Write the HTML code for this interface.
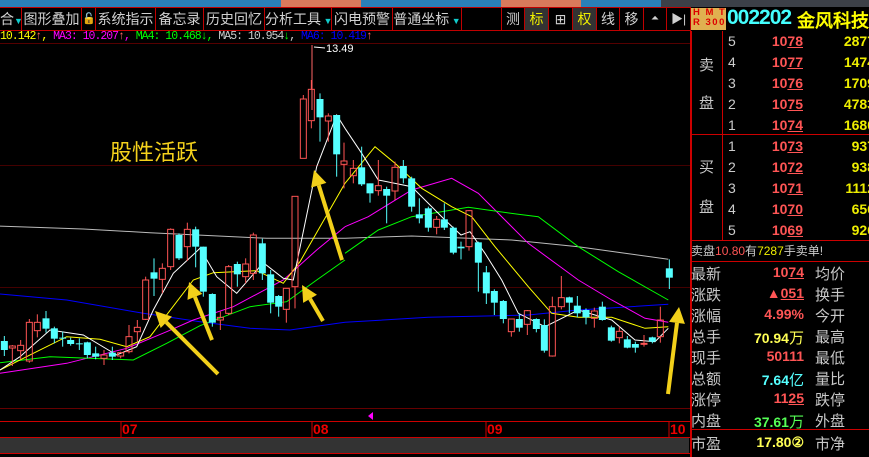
<!DOCTYPE html>
<html><head><meta charset="utf-8">
<style>
*{margin:0;padding:0;box-sizing:border-box}
body{width:869px;height:457px;background:#000;overflow:hidden;position:relative;font-family:"Liberation Sans","Noto Sans CJK SC",sans-serif}
.a{position:absolute;white-space:nowrap}
.tb{position:absolute;top:7px;height:24px;border:1px solid #c00000;border-left:none;color:#d0d0d0;font-size:14px;line-height:22px;text-align:center;white-space:nowrap;overflow:hidden}
.cj{font-family:"Liberation Sans","WenQuanYi Zen Hei",sans-serif}
.lg{font-family:"Liberation Mono",monospace;font-size:11.5px;top:30px;letter-spacing:-1px}
.lab{color:#c8c8c8;font-size:15px;font-family:"Liberation Sans","WenQuanYi Zen Hei",sans-serif}
.num{font-weight:bold;font-size:14px;font-family:"Liberation Sans",sans-serif}
</style></head><body>
<div class="a" style="left:0;top:0;width:869px;height:7px;background:#2a80b8"></div>
<div class="a" style="left:281px;top:0;width:80px;height:7px;background:#d97a5c"></div>
<div class="a" style="left:501px;top:0;width:80px;height:7px;background:#d97a5c"></div>
<div class="a" style="left:661px;top:0;width:208px;height:7px;background:#3c4048"></div>

<div class="tb cj" style="left:0;width:22px">合<span style="color:#1cc;font-size:9px">▼</span></div>
<div class="tb cj" style="left:22px;width:60px">图形叠加</div>
<div class="tb" style="left:82px;width:14px;font-size:11px">🔓</div>
<div class="tb cj" style="left:96px;width:60px">系统指示</div>
<div class="tb cj" style="left:156px;width:48px">备忘录</div>
<div class="tb cj" style="left:204px;width:61px">历史回忆</div>
<div class="tb cj" style="left:265px;width:67px">分析工具<span style="color:#1cc;font-size:9px"> ▼</span></div>
<div class="tb cj" style="left:332px;width:61px">闪电预警</div>
<div class="tb cj" style="left:393px;width:69px">普通坐标<span style="color:#1cc;font-size:9px"> ▼</span></div>
<div class="tb" style="left:462px;width:40px"></div>
<div class="tb cj" style="left:502px;width:23px">测</div>
<div class="tb cj" style="left:525px;width:24px;background:#333;color:#ee0">标</div>
<div class="tb" style="left:549px;width:24px">⊞</div>
<div class="tb cj" style="left:573px;width:24px;background:#333;color:#ee0">权</div>
<div class="tb cj" style="left:597px;width:23px">线</div>
<div class="tb cj" style="left:620px;width:24px">移</div>
<div class="tb" style="left:644px;width:23px;font-size:10px">⏶</div>
<div class="tb" style="left:667px;width:24px;font-size:12px">▶|</div>
<div class="a" style="left:691px;top:8px;width:35px;height:22px;background:#e0b050;color:#d00;font-size:9.5px;font-weight:bold;line-height:10px;padding-left:2px;letter-spacing:1.5px">H M T<br>R 300</div>
<div class="a" style="left:727px;top:6px;color:#4ff;font-size:21px;font-weight:bold;letter-spacing:-1px">002202</div>
<div class="a cj" style="left:797px;top:7px;color:#ff0;font-size:18px;font-weight:bold">金风科技</div>

<div class="a lg" style="left:0"><span style="color:#ff0">10.142</span><span style="color:#f66">↑</span><span style="color:#ff0">,</span> <span style="color:#f0f">MA3: 10.207</span><span style="color:#f66">↑</span><span style="color:#f0f">,</span> <span style="color:#0f0">MA4: 10.468↓,</span> <span style="color:#ccc">MA5: 10.954</span><span style="color:#0f0">↓</span><span style="color:#ccc">,</span> <span style="color:#00f">MA6: 10.419</span><span style="color:#f66">↑</span></div>

<svg class="a" style="left:0;top:0" width="691" height="457" id="ch">
<line x1="0" y1="43.5" x2="691" y2="43.5" stroke="#500" />
<line x1="0" y1="165.5" x2="691" y2="165.5" stroke="#400" />
<line x1="0" y1="287.5" x2="691" y2="287.5" stroke="#400" />
<line x1="0" y1="408.5" x2="691" y2="408.5" stroke="#600" />
<line x1="0" y1="421.5" x2="691" y2="421.5" stroke="#c00" />
<line x1="0" y1="437.5" x2="691" y2="437.5" stroke="#c00" />
<rect x="0" y="438" width="689" height="15" fill="#333"/>
<line x1="0" y1="453.5" x2="691" y2="453.5" stroke="#c00" />
<line x1="312" y1="45" x2="312" y2="110" stroke="#f66"/>
<text x="326" y="52" fill="#fff" font-family="Liberation Sans" font-size="11">13.49</text>
<line x1="314" y1="47" x2="325" y2="48" stroke="#fff"/>
<polygon points="368,416 373,412 373,420" fill="#f0f"/>
<g fill="#e00" font-family="Liberation Sans" font-size="14" font-weight="bold">
<line x1="121" y1="421" x2="121" y2="437" stroke="#c00"/><text x="122" y="434">07</text>
<line x1="312" y1="421" x2="312" y2="437" stroke="#c00"/><text x="313" y="434">08</text>
<line x1="486" y1="421" x2="486" y2="437" stroke="#c00"/><text x="487" y="434">09</text>
<line x1="669" y1="421" x2="669" y2="437" stroke="#c00"/><text x="670" y="434">10</text>
</g>
<text x="110" y="160" fill="#f5d21c" font-family="Liberation Sans,WenQuanYi Zen Hei,sans-serif" font-size="22">股性活跃</text>
</svg>

<div class="a" style="left:690px;top:31px;width:2px;height:426px;background:#c00"></div>
<div class="a" style="left:722px;top:31px;width:1px;height:209px;background:#c00"></div>
<div class="a" style="left:691px;top:134px;width:178px;height:1px;background:#c00"></div>
<div class="a" style="left:691px;top:240px;width:178px;height:1px;background:#c00"></div>
<div class="a" style="left:691px;top:261px;width:178px;height:1px;background:#c00"></div>
<div class="a" style="left:691px;top:429px;width:178px;height:1px;background:#c00"></div>
<div class="a lab" style="left:699px;top:54px">卖</div>
<div class="a lab" style="left:699px;top:92px">盘</div>
<div class="a lab" style="left:699px;top:156px">买</div>
<div class="a lab" style="left:699px;top:196px">盘</div>
<div id="ob"></div>
<div class="a cj" style="left:691px;top:242px;font-size:12px;color:#ccc">卖盘<span style="color:#f55">10.80</span>有<span style="color:#ee0">7287</span>手卖单!</div>
<div id="qt"></div>

<script>
var s=document.getElementById('ch'),NS='http://www.w3.org/2000/svg';
function el(t,a){var e=document.createElementNS(NS,t);for(var k in a)e.setAttribute(k,a[k]);s.insertBefore(e,s.querySelector('text'));return e;}
var c1=[[13,783,810,768,828,0],[37,798,804,795,858,1],[62,796,812,780,838,1],[88,727,843,717,848,1],[112,727,752,703,772,1],[138,715,746,693,758,0],[163,745,776,740,790,0],[188,773,776,755,800,0],[212,780,792,773,797,0],[238,790,792,775,810,0],[262,787,825,785,835,0],[287,820,830,800,838,0],[312,825,835,810,855,1],[337,818,830,800,840,0],[362,818,828,815,835,1],[387,770,815,735,820,1],[412,742,755,720,785,1],[437,600,718,590,720,1],[462,577,596,535,648,0],[487,565,598,550,640,1],[512,448,560,445,570,1],[537,465,535,460,540,0],[562,448,500,428,543,1],[587,448,500,440,562,0],[610,500,635,500,650,0],[637,642,728,640,740,0],[661,712,720,695,750,1],[686,560,700,555,705,1],[712,552,583,545,620,0],[737,552,590,535,610,1],[760,465,580,458,600,1],[787,490,580,476,600,0],[812,583,668,570,700,0],[836,648,680,645,710,0],[859,625,688,625,728,1],[885,349,620,349,685,1],[910,57,235,45,235,1],[934,28,122,0,145,1],[960,57,112,40,185,0],[985,108,123,100,185,1],[1010,105,223,105,290,0],[1032,243,253,188,325,1]];
var c2=[[25,265,287,240,310,1],[50,262,313,200,318,0],[75,310,340,310,368,0],[100,317,332,240,347,1],[125,327,347,320,430,0],[150,262,333,245,360,1],[175,258,295,240,310,0],[200,295,380,290,395,0],[223,403,415,355,430,0],[250,385,443,380,455,0],[275,418,442,408,463,1],[298,418,443,370,450,0],[325,443,518,440,523,0],[348,500,505,485,538,0],[372,392,500,390,512,1],[400,487,548,485,635,0],[424,577,640,558,672,0],[448,633,668,628,705,0],[475,663,717,660,730,0],[499,717,755,717,770,1],[523,717,743,700,755,0],[547,692,733,690,765,1],[574,717,747,715,757,0],[598,735,812,718,818,0],[622,680,828,650,830,1],[649,653,680,588,688,1],[673,652,668,650,700,0],[697,677,700,648,712,0],[723,690,712,685,733,0],[748,693,715,683,743,1],[772,680,720,665,722,0],[799,742,782,737,785,0],[823,754,773,740,790,1],[847,778,803,768,805,0],[871,792,803,785,818,0],[897,790,793,765,800,1],[922,772,785,770,790,0],[946,720,770,680,788,1],[973,565,593,538,627,0]];
function pl(a,off,col){var p=a.map(function(q){return (q[0]/3+off).toFixed(1)+','+(q[1]/3+80).toFixed(1)}).join(' ');el('polyline',{points:p,fill:'none',stroke:col,'stroke-width':1});}
var L={
'#bbb':[[[-10,438],[250,447],[450,458],[800,475],[1035,475]],[[0,475],[200,468],[500,480],[700,500],[970,538]]],
'#00f':[[[0,642],[200,660],[430,700],[600,725],[750,745],[870,750],[1035,727]],[[0,727],[250,712],[550,705],[700,690],[970,673]]],
'#f0f':[[[0,880],[200,850],[380,805],[500,755],[580,720],[700,680],[850,600],[950,510],[1035,440]],[[0,440],[70,410],[200,330],[320,295],[400,340],[550,490],[700,600],[800,660],[900,715],[970,727]]],
'#0f0':[[[0,848],[150,830],[400,840],[500,790],[600,737],[750,680],[860,665],[950,600],[1035,540]],[[0,520],[100,450],[200,410],[370,382],[520,403],[580,410],[700,500],[820,575],[970,660]]],
'#ff0':[[[0,870],[100,820],[200,770],[300,778],[380,800],[450,770],[580,600],[640,578],[770,572],[850,610],[900,545],[1035,310]],[[0,310],[90,200],[150,250],[230,325],[320,380],[380,410],[450,500],[550,620],[620,700],[700,712],[800,712],[900,745],[970,740]]],
'#fff':[[[0,870],[60,830],[150,750],[250,765],[350,825],[410,800],[460,690],[520,580],[600,505],[650,590],[710,640],[790,548],[850,595],[880,600],[950,260],[1010,105],[1035,145]],[[0,145],[50,220],[100,300],[200,320],[300,420],[348,465],[375,455],[420,520],[470,600],[520,700],[600,740],[700,690],[800,720],[870,780],[930,785],[970,745]]]};
for(var k in L){pl(L[k][0],0,k);pl(L[k][1],345,k);}
function cd(a,off){a.forEach(function(q){var x=q[0]/3+off,bt=q[1]/3+80,bb=q[2]/3+80,wt=q[3]/3+80,wb=q[4]/3+80;var col=q[5]?'#ff5555':'#55ffff';
var h=Math.max(bb-bt,1);
if(q[5]){el('line',{x1:x,y1:wt,x2:x,y2:bt,stroke:col});el('line',{x1:x,y1:bb,x2:x,y2:wb,stroke:col});
el('rect',{x:x-3,y:bt,width:6,height:h,fill:'none',stroke:col,'stroke-width':1});}
else{el('line',{x1:x,y1:wt,x2:x,y2:wb,stroke:col});el('rect',{x:x-3.5,y:bt,width:7,height:h,fill:col});}});}
cd(c1,0);cd(c2,345);
function ar(x1,y1,x2,y2){var dx=x2-x1,dy=y2-y1,l=Math.hypot(dx,dy),ux=dx/l,uy=dy/l,hl=16,hw=8;var bx=x2-ux*hl,by=y2-uy*hl;
el('line',{x1:x1,y1:y1,x2:bx,y2:by,stroke:'#f2d01a','stroke-width':4});
el('polygon',{points:x2+','+y2+' '+(bx-uy*hw)+','+(by+ux*hw)+' '+(bx+uy*hw)+','+(by-ux*hw),fill:'#f2d01a'});}
ar(218,374,155,311);ar(212,340,189,282);ar(342,260,314,170);ar(323,321,302,285);ar(668,394,679,307);
var ob=document.getElementById('ob'),h='';
var sell=[['5','1078','2877'],['4','1077','1474'],['3','1076','1709'],['2','1075','4783'],['1','1074','1680']];
var buy=[['1','1073','937'],['2','1072','938'],['3','1071','1112'],['4','1070','656'],['5','1069','926']];
function row(r,y){return '<div class="a num" style="left:728px;top:'+y+'px;color:#ccc;font-weight:normal">'+r[0]+'</div><div class="a num" style="left:760px;width:43px;text-align:right;top:'+y+'px;color:#ff5555">'+r[1].slice(0,2)+'<u>'+r[1].slice(2)+'</u></div><div class="a num" style="left:815px;width:60px;text-align:right;top:'+y+'px;color:#ee0">'+r[2]+'</div>';}
sell.forEach(function(r,i){h+=row(r,33+i*21)});buy.forEach(function(r,i){h+=row(r,138+i*21)});
ob.innerHTML=h;
var q=[['最新','<span style="color:#ff5555">10<u>74</u></span>','均价'],['涨跌','<span style="color:#ff5555">▲<u>051</u></span>','换手'],['涨幅','<span style="color:#ff5555">4.99%</span>','今开'],['总手','<span style="color:#ff5">70.94</span><span style="color:#ff5;font-weight:normal;font-size:15px">万</span>','最高'],['现手','<span style="color:#ff5555">50111</span>','最低'],['总额','<span style="color:#5ff">7.64</span><span style="color:#5ff;font-weight:normal;font-size:15px">亿</span>','量比'],['涨停','<span style="color:#ff5555">11<u>25</u></span>','跌停'],['内盘','<span style="color:#5f5">37.61</span><span style="color:#5f5;font-weight:normal;font-size:15px">万</span>','外盘'],['市盈','<span style="color:#ff5">17.80②</span>','市净']];
h='';q.forEach(function(r,i){var y=263+i*21+(i==8?2:0);h+='<div class="a lab" style="left:691px;top:'+y+'px">'+r[0]+'</div><div class="a num cj" style="left:730px;width:74px;text-align:right;top:'+(y+1)+'px">'+r[1]+'</div><div class="a lab" style="left:815px;top:'+y+'px">'+r[2]+'</div>';});
document.getElementById('qt').innerHTML=h;
</script>
</body></html>
